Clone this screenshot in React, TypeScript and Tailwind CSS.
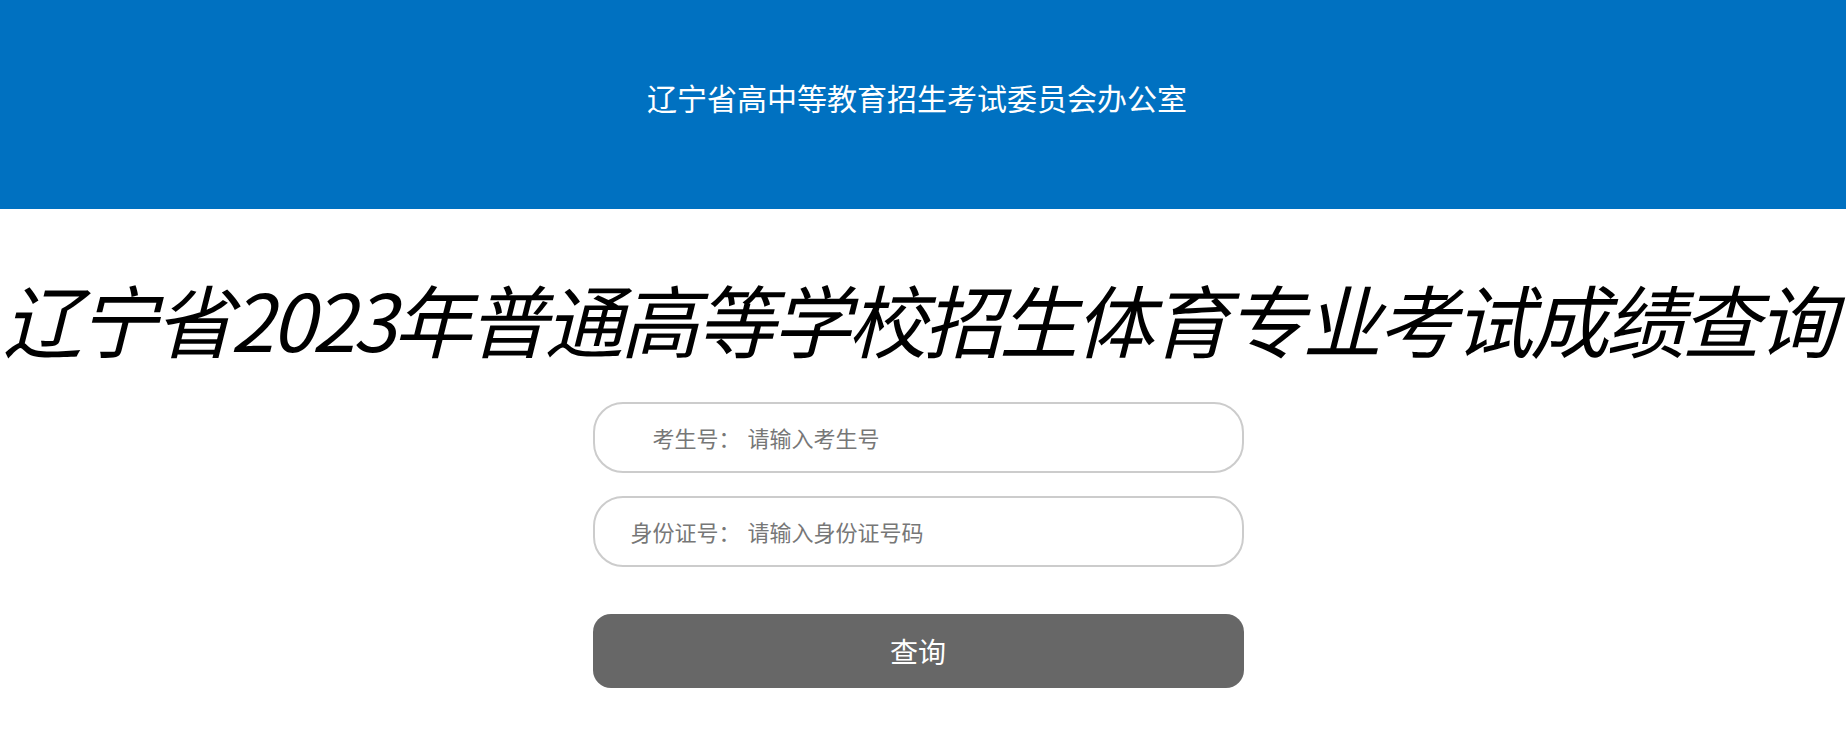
import React from "react";

export default function App() {
  const font = { fontFamily: '"Noto Sans CJK SC", "Noto Sans", sans-serif' };
  return (
    <div className="min-h-[738px] bg-white" style={font}>
      <div className="h-[209px] bg-[#0071c1] flex items-center justify-center pb-[16px] pr-[12px]">
        <div className="text-white text-[30px] leading-none">辽宁省高中等教育招生考试委员会办公室</div>
      </div>
      <div className="flex flex-col items-center pr-[10px]">
        <h1 className="mt-[69px] text-[79px] leading-[80px] tracking-[-3.2px] italic font-normal text-black whitespace-nowrap">
          辽宁省2023年普通高等学校招生体育专业考试成绩查询
        </h1>
        <div className="mt-[44px] w-[651px] h-[71px] border-2 border-[#cccccc] rounded-[30px] flex items-center">
          <span className="w-[146px] text-right text-[22px] text-[#777777] shrink-0">考生号：</span>
          <input
            className="ml-[7px] flex-1 mr-[20px] outline-none text-[22px] text-[#555] placeholder:text-[#777777] bg-transparent"
            placeholder="请输入考生号"
            style={font}
          />
        </div>
        <div className="mt-[23px] w-[651px] h-[71px] border-2 border-[#cccccc] rounded-[30px] flex items-center">
          <span className="w-[146px] text-right text-[22px] text-[#777777] shrink-0">身份证号：</span>
          <input
            className="ml-[7px] flex-1 mr-[20px] outline-none text-[22px] text-[#555] placeholder:text-[#777777] bg-transparent"
            placeholder="请输入身份证号码"
            style={font}
          />
        </div>
        <button
          className="mt-[47px] w-[651px] h-[74px] bg-[#676767] rounded-[18px] text-white text-[28px] flex items-center justify-center"
          style={font}
        >
          查询
        </button>
      </div>
    </div>
  );
}
